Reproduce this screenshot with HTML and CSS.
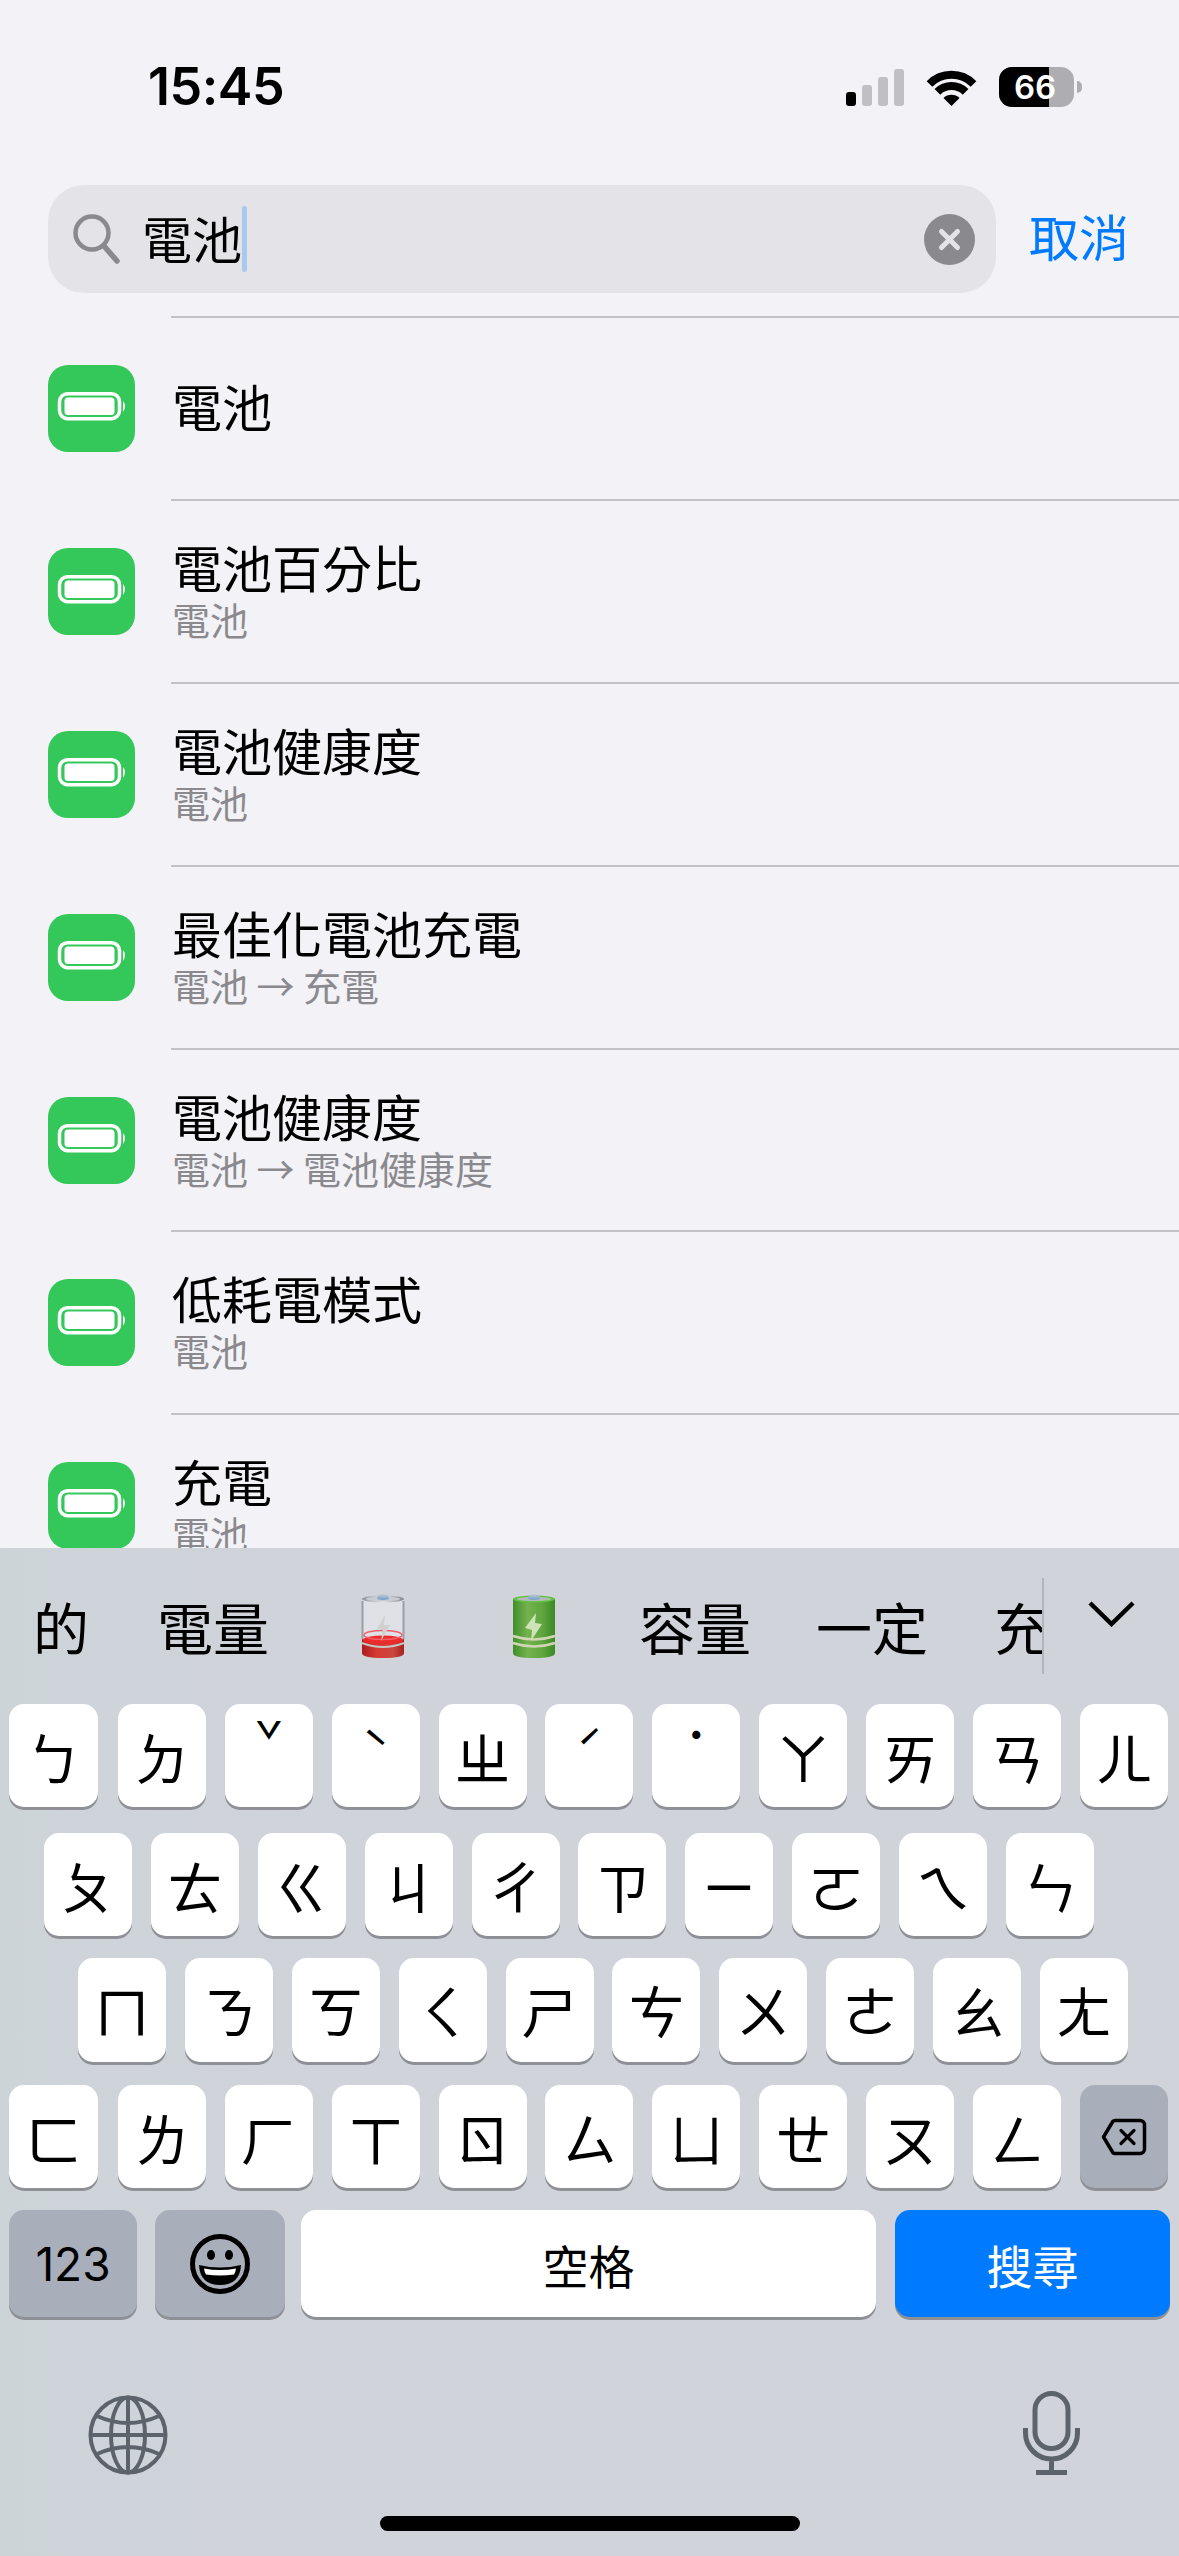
FILE: index.html
```html
<!DOCTYPE html>
<html lang="zh-Hant">
<head>
<meta charset="utf-8">
<title>設定搜尋</title>
<link rel="stylesheet" href="styles.css">
</head>
<body>
<svg class="defs" width="0" height="0" aria-hidden="true">
  <defs>
    <symbol id="bat" viewBox="0 0 87 87">
      <rect x="11.500" y="28.700" width="60" height="25" rx="8" fill="none" stroke="#fff" stroke-width="3.500"/>
      <rect x="16.500" y="32.500" width="50" height="17.500" rx="3.500" fill="#fff"/>
      <path d="M75 36q4 5 0 11z" fill="#fff"/>
    </symbol>
    <linearGradient id="metal" x1="0" x2="1" y1="0" y2="0">
      <stop offset="0" stop-color="#8f9399"/><stop offset=".5" stop-color="#e4e6ea"/><stop offset="1" stop-color="#84888e"/>
    </linearGradient>
    <linearGradient id="cap" x1="0" x2="0" y1="0" y2="1">
      <stop offset="0" stop-color="#c9cdd3"/><stop offset="1" stop-color="#6f9fc9"/>
    </linearGradient>
    <linearGradient id="redg" x1="0" x2="1" y1="0" y2="0">
      <stop offset="0" stop-color="#a81d1d"/><stop offset=".35" stop-color="#d63a34"/><stop offset=".75" stop-color="#c9463f"/><stop offset="1" stop-color="#a51f1f"/>
    </linearGradient>
    <linearGradient id="greeng" x1="0" x2="1" y1="0" y2="0">
      <stop offset="0" stop-color="#3f8f2a"/><stop offset=".35" stop-color="#74b24e"/><stop offset=".7" stop-color="#5fa53d"/><stop offset="1" stop-color="#3b8a26"/>
    </linearGradient>
  </defs>
</svg>
<div class="phone">
  <header class="status">
    <span class="time">15:45</span>
    <div class="status-icons">
      <svg class="signal" width="58" height="37" viewBox="0 0 58 37">
        <rect x="0" y="23" width="10" height="14" rx="3" fill="#000"/>
        <rect x="16" y="16" width="10" height="21" rx="3" fill="#bfbfc4"/>
        <rect x="32" y="8" width="10" height="29" rx="3" fill="#bfbfc4"/>
        <rect x="48" y="0" width="10" height="37" rx="3" fill="#bfbfc4"/>
      </svg>
      <svg class="wifi" width="51" height="37" viewBox="0 0 51 37">
        <path d="M3.500 15A31 31 0 0 1 47.500 15" fill="none" stroke="#000" stroke-width="8"/>
        <path d="M11.400 22.900A20 20 0 0 1 39.600 22.900" fill="none" stroke="#000" stroke-width="8"/>
        <path d="M25.500 37L17.500 29A11.500 11.500 0 0 1 33.500 29Z" fill="#000"/>
      </svg>
      <div class="battery">
        <div class="battery-body"><span class="battery-fill"></span><span class="battery-num">66</span></div>
        <span class="battery-nub"></span>
      </div>
    </div>
  </header>

  <div class="search-row">
    <div class="search-field">
      <svg class="glass" width="47" height="50" viewBox="0 0 47 50">
        <circle cx="19" cy="19" r="16.500" fill="none" stroke="#8a8a8e" stroke-width="4.500"/>
        <path d="M31 32L44 47" fill="none" stroke="#8a8a8e" stroke-width="5.500" stroke-linecap="round"/>
      </svg>
      <span class="query">電池</span><span class="caret"></span>
      <svg class="clear" width="51" height="51" viewBox="0 0 51 51">
        <circle cx="25.500" cy="25.500" r="25.500" fill="#8a8a8e"/>
        <path d="M17.500 17.500L33.500 33.500M33.500 17.500L17.500 33.500" stroke="#e3e3e8" stroke-width="5" stroke-linecap="round"/>
      </svg>
    </div>
    <span class="cancel">取消</span>
  </div>

  <main class="results">
    <div class="row">
      <svg class="app-icon" viewBox="0 0 87 87"><rect width="87" height="87" rx="20" fill="#34c85a"/><use href="#bat"/></svg>
      <div class="row-body"><div class="title">電池</div></div>
    </div>
    <div class="row">
      <svg class="app-icon" viewBox="0 0 87 87"><rect width="87" height="87" rx="20" fill="#34c85a"/><use href="#bat"/></svg>
      <div class="row-body"><div class="title">電池百分比</div><div class="sub">電池</div></div>
    </div>
    <div class="row">
      <svg class="app-icon" viewBox="0 0 87 87"><rect width="87" height="87" rx="20" fill="#34c85a"/><use href="#bat"/></svg>
      <div class="row-body"><div class="title">電池健康度</div><div class="sub">電池</div></div>
    </div>
    <div class="row">
      <svg class="app-icon" viewBox="0 0 87 87"><rect width="87" height="87" rx="20" fill="#34c85a"/><use href="#bat"/></svg>
      <div class="row-body"><div class="title">最佳化電池充電</div><div class="sub">電池 → 充電</div></div>
    </div>
    <div class="row">
      <svg class="app-icon" viewBox="0 0 87 87"><rect width="87" height="87" rx="20" fill="#34c85a"/><use href="#bat"/></svg>
      <div class="row-body"><div class="title">電池健康度</div><div class="sub">電池 → 電池健康度</div></div>
    </div>
    <div class="row">
      <svg class="app-icon" viewBox="0 0 87 87"><rect width="87" height="87" rx="20" fill="#34c85a"/><use href="#bat"/></svg>
      <div class="row-body"><div class="title">低耗電模式</div><div class="sub">電池</div></div>
    </div>
    <div class="row">
      <svg class="app-icon" viewBox="0 0 87 87"><rect width="87" height="87" rx="20" fill="#34c85a"/><use href="#bat"/></svg>
      <div class="row-body"><div class="title">充電</div><div class="sub">電池</div></div>
    </div>
  </main>

  <section class="keyboard">
    <div class="candidates">
      <div class="cand-list">
        <span class="cand">的</span>
        <span class="cand">電量</span>
        <span class="cand cand-emoji cand-red">
          <svg width="44" height="66" viewBox="0 0 44 66">
            <rect x="1" y="6" width="42" height="54" rx="3" fill="#e6e7eb" opacity=".7"/>
            <path d="M1 46v14q0 5 21 5t21-5V46q-21 8-42 0z" fill="url(#redg)"/>
            <ellipse cx="22" cy="47" rx="20" ry="4.500" fill="#ee2b2b"/>
            <ellipse cx="22" cy="42" rx="19" ry="4.500" fill="none" stroke="#f1606a" stroke-width="1.500"/>
            <path d="M1.500 8v38M42.500 8v38" stroke="#9a9ea5" stroke-width="2"/>
            <path d="M1 50q21 8 42 0" fill="none" stroke="#c8c8c4" stroke-width="2"/>
            <path d="M24 22l-8 14 6 0-2 12 9-16-6 0z" fill="#cfd0cf"/>
            <ellipse cx="22" cy="6" rx="21" ry="3.500" fill="url(#metal)"/>
            <ellipse cx="22" cy="6" rx="17" ry="2.200" fill="#c9ccd2"/>
            <path d="M16 6q0-5 6-5t6 5q-6 2-12 0z" fill="url(#cap)"/>
          </svg>
        </span>
        <span class="cand cand-emoji cand-green">
          <svg width="44" height="66" viewBox="0 0 44 66">
            <path d="M1 6v54q0 5 21 5t21-5V6z" fill="url(#greeng)"/>
            <path d="M1 43q21 7 42 0M1 50q21 7 42 0" fill="none" stroke="#d0d6b5" stroke-width="2.500"/>
            <path d="M24 20l-11 15 7 2-1 11 11-17-7-1z" fill="#cfe3b8"/>
            <ellipse cx="22" cy="6" rx="21" ry="3.500" fill="#5fc33f"/>
            <ellipse cx="22" cy="6" rx="17" ry="2.200" fill="#b4bab8"/>
            <path d="M16 6q0-5 6-5t6 5q-6 2-12 0z" fill="url(#cap)"/>
          </svg>
        </span>
        <span class="cand cand-tight">容量</span>
        <span class="cand cand-tight2">一定</span>
        <span class="cand">充電</span>
      </div>
      <svg class="chevron" width="47" height="26" viewBox="0 0 47 26">
        <path d="M2 2L23.500 23L45 2" fill="none" stroke="#000" stroke-width="4.500"/>
      </svg>
    </div>

    <div class="key-row row-1">
      <span class="key">ㄅ</span><span class="key">ㄉ</span><span class="key tone-3">ˇ</span><span class="key tone-4">ˋ</span><span class="key">ㄓ</span><span class="key tone-2">ˊ</span><span class="key tone-5">˙</span><span class="key">ㄚ</span><span class="key">ㄞ</span><span class="key">ㄢ</span><span class="key">ㄦ</span>
    </div>
    <div class="key-row row-2">
      <span class="key">ㄆ</span><span class="key">ㄊ</span><span class="key">ㄍ</span><span class="key">ㄐ</span><span class="key">ㄔ</span><span class="key">ㄗ</span><span class="key">ㄧ</span><span class="key">ㄛ</span><span class="key">ㄟ</span><span class="key">ㄣ</span>
    </div>
    <div class="key-row row-3">
      <span class="key">ㄇ</span><span class="key">ㄋ</span><span class="key">ㄎ</span><span class="key">ㄑ</span><span class="key">ㄕ</span><span class="key">ㄘ</span><span class="key">ㄨ</span><span class="key">ㄜ</span><span class="key">ㄠ</span><span class="key">ㄤ</span>
    </div>
    <div class="key-row row-4">
      <span class="key">ㄈ</span><span class="key">ㄌ</span><span class="key">ㄏ</span><span class="key">ㄒ</span><span class="key">ㄖ</span><span class="key">ㄙ</span><span class="key">ㄩ</span><span class="key">ㄝ</span><span class="key">ㄡ</span><span class="key">ㄥ</span>
      <span class="key key-dark">
        <svg width="46" height="38" viewBox="0 0 46 38">
          <path d="M14 2.500H39a4.500 4.500 0 0 1 4.500 4.500V31a4.500 4.500 0 0 1-4.500 4.500H14a3 3 0 0 1-2.200-1L2.500 19l9.300-15.500a3 3 0 0 1 2.200-1z" fill="none" stroke="#000" stroke-width="3.500" stroke-linejoin="round"/>
          <path d="M20 12.500L33 25.500M33 12.500L20 25.500" stroke="#000" stroke-width="3.200" stroke-linecap="round"/>
        </svg>
      </span>
    </div>
    <div class="key-row row-5">
      <span class="key key-dark key-num">123</span>
      <span class="key key-dark key-emoji">
        <svg width="60" height="60" viewBox="0 0 60 60">
          <circle cx="30" cy="30" r="27.500" fill="none" stroke="#000" stroke-width="5"/>
          <ellipse cx="21" cy="21" rx="4" ry="5"/>
          <ellipse cx="39" cy="21" rx="4" ry="5"/>
          <path d="M9 31q21 5 42 0q-1 20-21 20T9 31z"/>
          <path d="M14 34.500q16 3 32 0q-.5 4-2 6q-14 2-28 0q-1.500-2-2-6z" fill="#fff"/>
        </svg>
      </span>
      <span class="key key-space">空格</span>
      <span class="key key-search">搜尋</span>
    </div>

    <div class="kb-bottom">
      <svg class="globe" width="80" height="80" viewBox="0 0 80 80">
        <g fill="none" stroke="#5d636b" stroke-width="4">
          <circle cx="40" cy="40" r="37.500"/>
          <ellipse cx="40" cy="40" rx="17" ry="37.500"/>
          <path d="M40 2.500V77.500M2.500 40H77.500M9 21q31 14 62 0M9 59q31-14 62 0"/>
        </g>
      </svg>
      <svg class="mic" width="57" height="84" viewBox="0 0 57 84">
        <g fill="none" stroke="#5d636b" stroke-width="5">
          <rect x="12" y="2.500" width="33" height="55" rx="16.500"/>
          <path d="M2.500 37v5a26 26 0 0 0 52 0v-5M28.500 68v13M13 81.500h31"/>
        </g>
      </svg>
    </div>
    <div class="home"></div>
  </section>
</div>
</body>
</html>
```

FILE: styles.css
```css
* { box-sizing: border-box; }
html, body { margin: 0; padding: 0; }
body { background: #f2f2f7; font-family: "Noto Sans CJK TC", "Noto Sans", sans-serif; color: #000; }
.defs { position: absolute; }
.phone { width: 1179px; height: 2556px; display: flex; flex-direction: column; overflow: hidden; background: #f2f2f7; }

.status { height: 185px; flex: none; display: flex; justify-content: space-between; align-items: flex-start; padding: 60px 97px 0 148px; }
.time { font-family: Inter, "Liberation Sans", sans-serif; font-weight: 600; font-size: 52px; line-height: 54px; letter-spacing: -0.5px; }
.status-icons { display: flex; align-items: flex-start; padding-top: 9px; }
.signal { margin-right: 22px; }
.wifi { margin-right: 22px; }
.battery { display: flex; align-items: center; margin-top: -2px; height: 40px; }
.battery-body { position: relative; width: 75px; height: 40px; border-radius: 13px; background: #aeaeb2; overflow: hidden; display: flex; align-items: center; justify-content: center; }
.battery-fill { position: absolute; left: 0; top: 0; bottom: 0; width: 50px; background: #000; }
.battery-num { position: relative; font-family: Inter, "Liberation Sans", sans-serif; font-weight: 600; font-size: 33px; line-height: 40px; color: #fff; margin-left: -3px; }
.battery-nub { width: 5px; height: 12px; margin-left: 3px; background: #aeaeb2; border-radius: 0 6px 6px 0; }

.search-row { height: 108px; flex: none; display: flex; align-items: center; padding-left: 48px; }
.search-field { width: 948px; height: 108px; border-radius: 36px; background: #e3e3e8; display: flex; align-items: center; padding: 0 21px 0 25px; }
.glass { flex: none; margin-right: 22px; }
.query { font-size: 50px; line-height: 60px; margin-bottom: 5px; }
.caret { width: 5px; height: 66px; background: #a9c9ef; border-radius: 3px; }
.clear { margin-left: auto; flex: none; }
.cancel { margin-left: 33px; font-size: 50px; line-height: 60px; color: #007aff; margin-bottom: 9px; }

.results { flex: 1; min-height: 0; overflow: hidden; margin-top: 23px; }
.row { height: 182.9px; display: flex; align-items: center; padding-left: 48px; }
.app-icon { width: 87px; height: 87px; flex: none; margin-top: 2px; }
.row-body { height: 182.9px; flex: 1; margin-left: 36px; padding: 0 0 6px 1px; border-top: 2px solid #c2c2c6; display: flex; flex-direction: column; justify-content: center; }
.title { font-size: 50px; line-height: 60px; }
.sub { font-size: 38px; line-height: 44px; color: #8a8a8e; margin-top: 1px; }

.keyboard { height: 1008px; flex: none; background: linear-gradient(90deg, #cdd4d8 0, #d0d3da 30%, #d0d3da 100%); }
.candidates { height: 156px; display: flex; align-items: center; }
.cand-list { width: 1044px; height: 96px; flex: none; display: flex; align-items: center; overflow: hidden; border-right: 2px solid #b1b4ba; white-space: nowrap; }
.cand { flex: none; font-size: 56px; line-height: 96px; padding: 0 34px; }
.cand:first-child { padding-left: 33px; }
.cand-emoji { display: flex; align-items: center; }
.cand-red { padding: 0 53px 0 58px; }
.cand-green { padding: 0 49px 0 54px; }
.cand-tight { padding-right: 31px; }
.cand-tight2 { padding-right: 32px; }
.chevron { margin-left: 44px; margin-top: -24px; flex: none; }

.key-row { display: flex; gap: 18.9px; }
.key { flex: none; width: 88px; display: flex; align-items: center; justify-content: center; background: #fff; border-radius: 15px; box-shadow: 0 3px 0 #8e9096; font-size: 56px; line-height: 1; }
.tone-3 { font-size: 48px; padding-bottom: 34px; }
.tone-4, .tone-2 { font-size: 46px; padding-bottom: 18px; }
.tone-5 { font-size: 44px; padding-bottom: 46px; }
.row-1 .key:first-child, .row-4 .key:first-child { width: 89px; margin-right: 1px; }
.row-1 { padding-left: 9px; height: 103px; }
.row-2 { padding-left: 44px; height: 103px; margin-top: 26px; }
.row-3 { padding-left: 78px; height: 104px; margin-top: 22px; }
.row-3 .key { padding-bottom: 3px; }
.row-4 { padding-left: 9px; height: 103px; margin-top: 23px; }
.row-5 { padding-left: 9px; height: 107px; margin-top: 22px; gap: 0; }
.key-dark { background: #a9afba; }
.key-num { width: 128px; font-family: Inter, "Liberation Sans", sans-serif; font-size: 46px; }
.key-emoji { width: 130px; margin-left: 18px; }
.key-space { width: 575px; margin-left: 16px; font-size: 46px; }
.key-search { width: 275px; margin-left: 19px; font-size: 46px; background: #007aff; color: #fff; }

.kb-bottom { display: flex; justify-content: space-between; align-items: flex-end; padding: 0 99px 0 88px; margin-top: 73px; height: 85px; }
.home { width: 420px; height: 15px; border-radius: 8px; background: #000; margin: 41px auto 0; }
```
